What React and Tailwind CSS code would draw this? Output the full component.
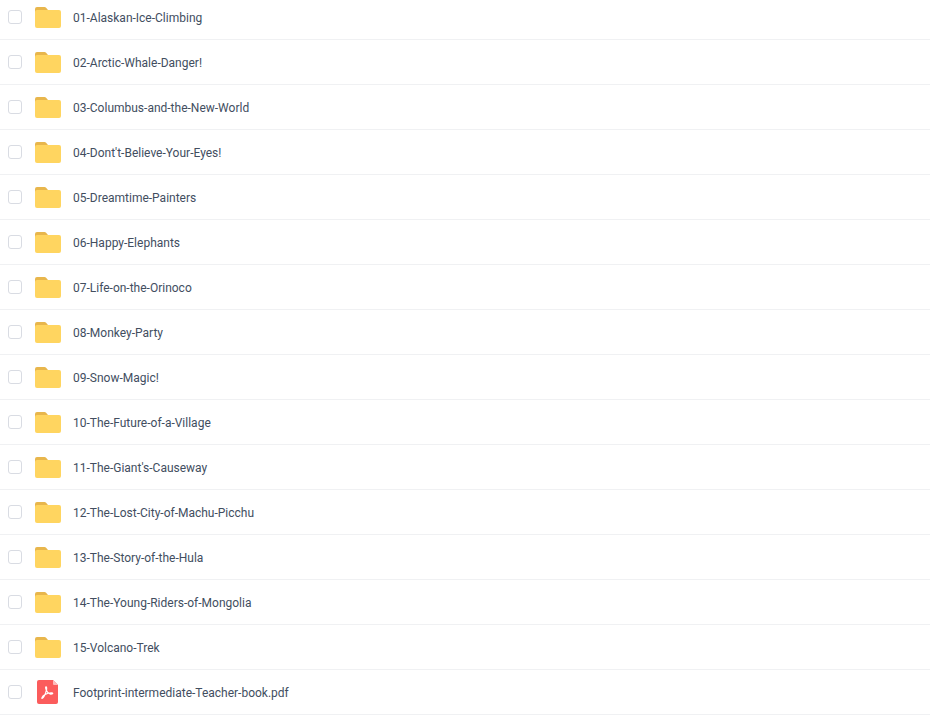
import React from 'react';

const folders = [
  '01-Alaskan-Ice-Climbing',
  '02-Arctic-Whale-Danger!',
  '03-Columbus-and-the-New-World',
  "04-Dont't-Believe-Your-Eyes!",
  '05-Dreamtime-Painters',
  '06-Happy-Elephants',
  '07-Life-on-the-Orinoco',
  '08-Monkey-Party',
  '09-Snow-Magic!',
  '10-The-Future-of-a-Village',
  "11-The-Giant's-Causeway",
  '12-The-Lost-City-of-Machu-Picchu',
  '13-The-Story-of-the-Hula',
  '14-The-Young-Riders-of-Mongolia',
  '15-Volcano-Trek',
];

function FolderIcon() {
  return (
    <svg width="26" height="21" viewBox="0 0 26 21" className="block">
      <path d="M0 2a2 2 0 0 1 2-2h7.500a2 2 0 0 1 1.600.8L13 3v3H0z" fill="#e8b64c" />
      <path d="M0 5a2 2 0 0 1 2-2h22a2 2 0 0 1 2 2v14a2 2 0 0 1-2 2H2a2 2 0 0 1-2-2z" fill="#ffd560" />
    </svg>
  );
}

function PdfIcon() {
  return (
    <svg width="21" height="24" viewBox="0 0 21 24" className="ml-[2px] block">
      <path d="M2 0h14l5 5v17a2 2 0 0 1-2 2H2a2 2 0 0 1-2-2V2a2 2 0 0 1 2-2z" fill="#fb5c5c" />
      <path d="M16 0l5 5h-4a1 1 0 0 1-1-1z" fill="#fdbcbc" />
      <path
        d="M5 18.500c1.500-.8 3.500-4.500 4.600-9 .3-1.400-.1-3-.7-2.800-.7.2-.2 2.200.3 3.300.8 2 2.300 3.300 3.800 3.900 1 .3 2.800.3 2.800-.4 0-.7-2.200-.8-4.600-.2-2.500.6-5 2-6.200 4.100-.3.600-.2 1 0 1.100z"
        fill="none"
        stroke="#fff"
        strokeWidth="1.100"
      />
    </svg>
  );
}

function Row({ name, icon }) {
  return (
    <div className="flex h-[45px] items-center border-b border-[#f0f1f3] pl-2">
      <span className="h-[14px] w-[14px] shrink-0 rounded-[3px] border border-[#d9dce3] bg-white" />
      <span className="ml-[13px] flex w-[26px] shrink-0">{icon}</span>
      <span className="ml-3 pt-px text-xs text-[#424e5f]">{name}</span>
    </div>
  );
}

export default function App() {
  return (
    <div className="h-[726px] overflow-hidden bg-white font-['Roboto',sans-serif]">
      <div className="-mt-[5px]">
        {folders.map((name) => (
          <Row key={name} name={name} icon={<FolderIcon />} />
        ))}
        <Row name="Footprint-intermediate-Teacher-book.pdf" icon={<PdfIcon />} />
      </div>
    </div>
  );
}
